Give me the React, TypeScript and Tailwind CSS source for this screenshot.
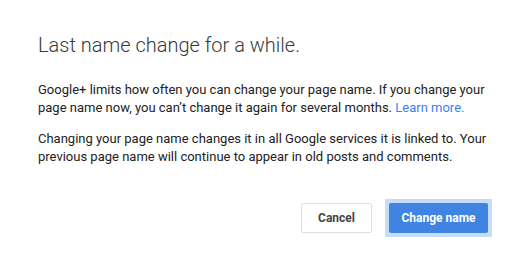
import React from "react";

export default function App() {
  return (
    <div className="w-[526px] h-[265px] bg-white font-['Roboto',sans-serif]">
      <div className="px-[34px] pt-[33px]">
        <div className="px-[4px]">
          <h1 className="text-[20px] leading-[24px] font-light text-[#3a3a3a]">
            Last name change for a while.
          </h1>
          <p className="mt-[24px] text-[13px] leading-[18px] text-[#222]">
            Google+ limits how often you can change your page name. If you
            change your page name now, you can’t change it again for several
            months. <a className="text-[#427fed]">Learn more.</a>
          </p>
          <p className="mt-[13px] text-[13px] leading-[18px] text-[#222]">
            Changing your page name changes it in all Google services it is
            linked to. Your previous page name will continue to appear in old
            posts and comments.
          </p>
        </div>
        <div className="mt-[33px] flex justify-end items-center gap-[13px]">
          <button className="w-[71px] h-[30px] rounded-[2px] border border-[#e0e0e0] bg-white text-[12px] font-bold text-[#444]">
            Cancel
          </button>
          <div className="p-[4px] bg-[#c6dcf7]">
            <button className="block w-[99px] h-[30px] rounded-[2px] bg-[#3f84e3] text-[12px] font-bold text-white">
              Change name
            </button>
          </div>
        </div>
      </div>
    </div>
  );
}
